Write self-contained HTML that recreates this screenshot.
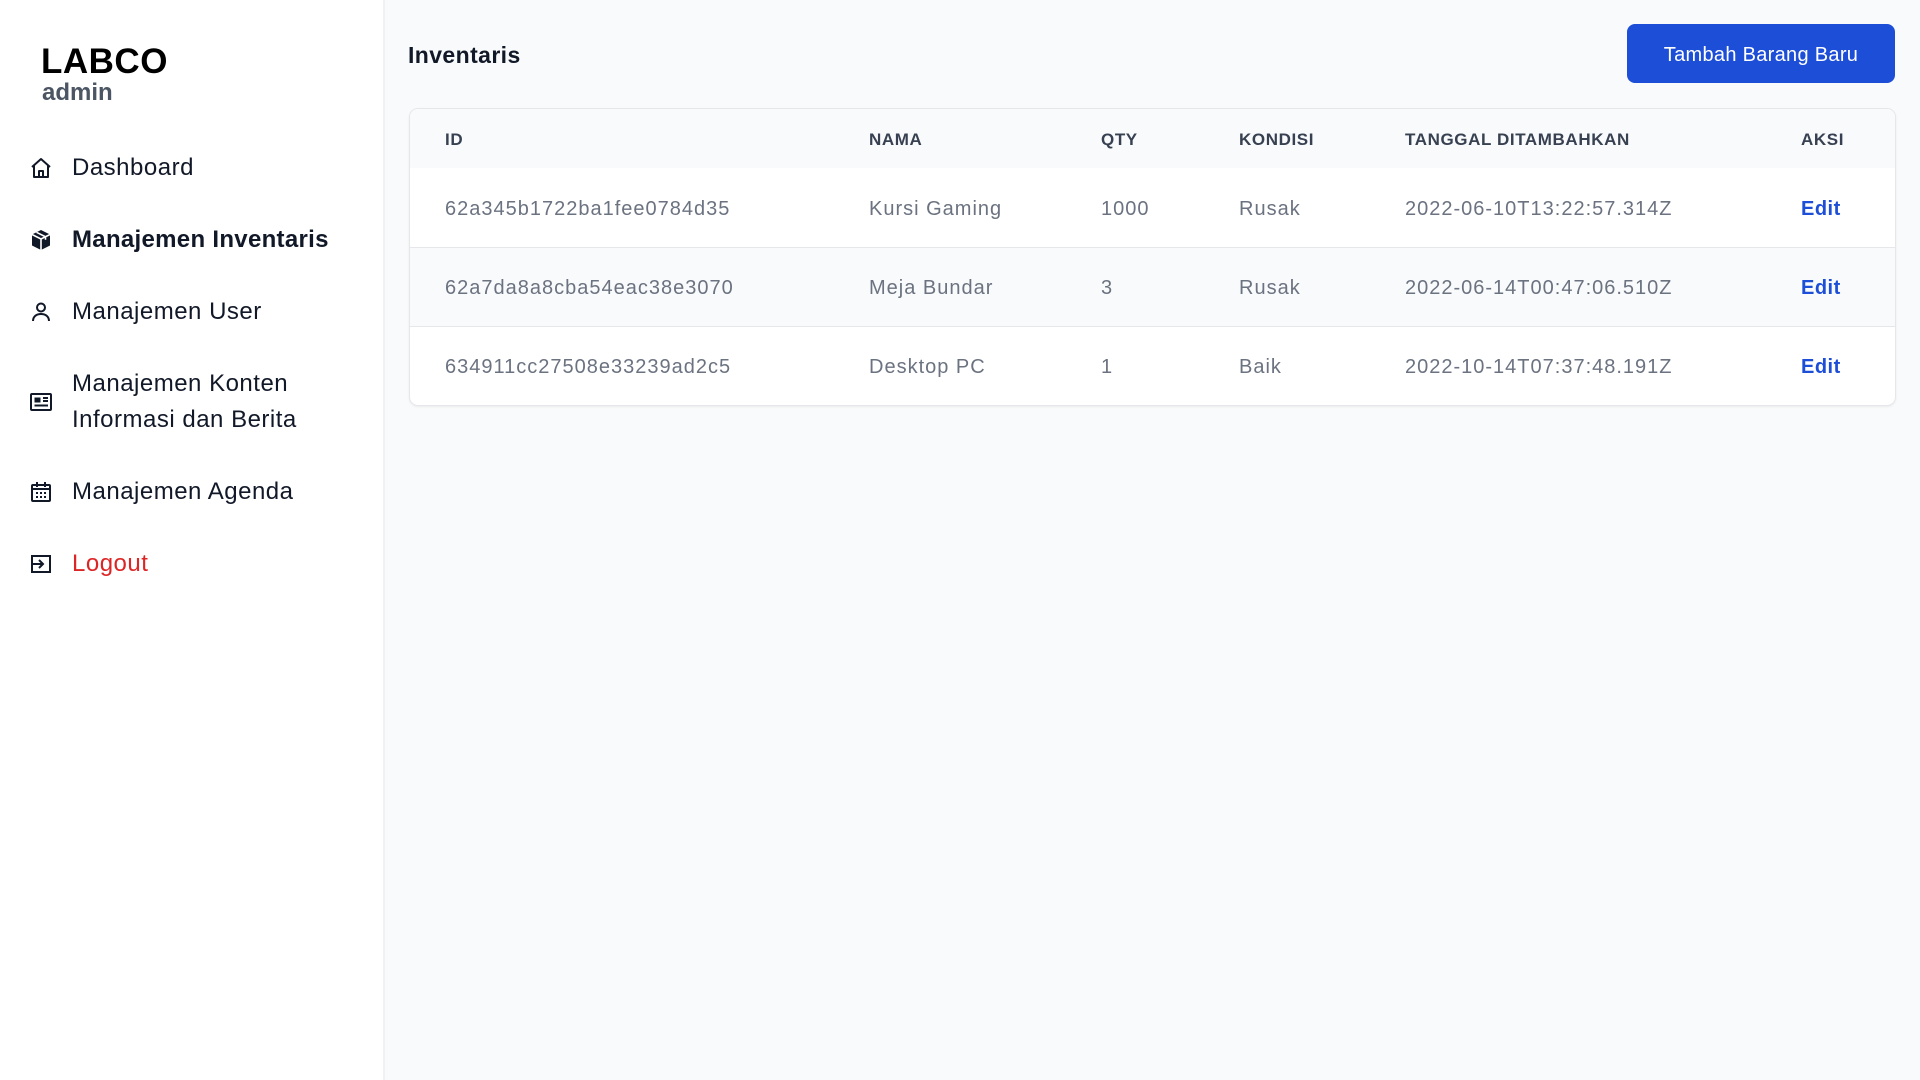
<!DOCTYPE html>
<html><head><meta charset="utf-8"><style>
*{box-sizing:border-box;margin:0;padding:0}
body{width:1920px;height:1080px;background:#f9fafb;font-family:"Liberation Sans",sans-serif;color:#111827;position:relative;overflow:hidden}
.side{position:absolute;left:0;top:0;width:385px;height:1080px;background:#fff;border-right:2px solid #f0f1f3}
.logo{position:absolute;left:41px;top:42px;font-size:35px;font-weight:bold;color:#000;letter-spacing:0.5px}
.adm{position:absolute;left:42px;top:79px;font-size:24px;font-weight:bold;color:#4b5563}
.nav{position:absolute;left:29px;display:flex;align-items:center;font-size:24px;line-height:36px;color:#111827;letter-spacing:0.5px}
.nav svg{width:24px;height:24px;margin-right:19px;flex:none}
.main{position:absolute;left:385px;top:0;right:0}
h1{position:absolute;left:23px;top:42px;font-size:23px;font-weight:bold;letter-spacing:0.4px}
.btn{position:absolute;left:1242px;top:24px;width:268px;height:59px;background:#1d4ed8;color:#fff;border-radius:8px;font-size:20px;display:flex;align-items:center;justify-content:center;padding-top:3px;letter-spacing:0.3px}
.tbl{position:absolute;left:24px;top:108px;width:1487px;border:1px solid #e5e7eb;border-radius:9px;overflow:hidden;background:#fff;box-shadow:0 1px 2px rgba(0,0,0,.06)}
table{border-collapse:collapse;table-layout:fixed;width:100%}
th{height:59px;background:#f9fafb;text-align:left;padding-left:35px;padding-top:3px;font-size:17px;font-weight:bold;color:#374151;letter-spacing:0.6px}
td{height:79px;padding-left:35px;padding-top:4px;font-size:20px;color:#6b7280;border-top:1px solid #e5e7eb;letter-spacing:1px}
tr.g td{background:#f9fafb}
td.e{color:#1d4ed8;font-weight:bold;letter-spacing:0.5px}
</style></head><body>
<div class="side">
<div class="logo">LABCO</div>
<div class="adm">admin</div>
<div class="nav" style="top:150px"><svg viewBox="0 0 24 24" fill="none" stroke="#111827" stroke-width="2" stroke-linejoin="round"><path d="M3 11l9-8 9 8M5 9.5V21h14V9.5M10 21v-6h4v6"/></svg>Dashboard</div>
<div class="nav" style="top:222px;font-weight:bold;letter-spacing:0.3px"><svg viewBox="0 0 24 24"><path d="M12 2l9 4.5v11L12 22l-9-4.5v-11z" fill="#111827"/><path d="M3 6.5l9 4.5 9-4.5M12 11v11M7.5 4.3l9 4.5v3" stroke="#fff" stroke-width="1.6" fill="none"/></svg>Manajemen Inventaris</div>
<div class="nav" style="top:294px"><svg viewBox="0 0 24 24" fill="none" stroke="#111827" stroke-width="2"><circle cx="12" cy="7.5" r="4"/><path d="M4 21c0-4.5 3.5-7 8-7s8 2.5 8 7"/></svg>Manajemen User</div>
<div class="nav" style="top:366px"><svg viewBox="0 0 24 24" fill="none" stroke="#111827" stroke-width="2"><rect x="2" y="4" width="20" height="16" rx="1"/><rect x="5.5" y="7.5" width="6" height="5" fill="#111827" stroke="none"/><path d="M14 8h5M14 11h5M5.5 15.5h13.5"/></svg>Manajemen Konten<br>Informasi dan Berita</div>
<div class="nav" style="top:474px"><svg viewBox="0 0 24 24" fill="none" stroke="#111827" stroke-width="2"><rect x="3" y="5" width="18" height="16" rx="1"/><path d="M3 9h18M8 2v5M16 2v5"/><path d="M7 13h2M11 13h2M15 13h2M7 17h2M11 17h2M15 17h2" stroke-width="2"/></svg>Manajemen Agenda</div>
<div class="nav" style="top:546px;color:#dc2626"><svg viewBox="0 0 24 24" fill="none" stroke="#111827" stroke-width="2"><path d="M9 4H3v16h18V4h-12M3 4v4M3 16v4" /><path d="M2 12h12M10 8l4 4-4 4"/></svg>Logout</div>
</div>
<div class="main">
<h1>Inventaris</h1>
<div class="btn">Tambah Barang Baru</div>
<div class="tbl"><table>
<colgroup><col style="width:424px"><col style="width:232px"><col style="width:138px"><col style="width:166px"><col style="width:396px"><col></colgroup>
<tr><th>ID</th><th>NAMA</th><th>QTY</th><th>KONDISI</th><th>TANGGAL DITAMBAHKAN</th><th>AKSI</th></tr>
<tr><td style="border-top:none">62a345b1722ba1fee0784d35</td><td style="border-top:none">Kursi Gaming</td><td style="border-top:none">1000</td><td style="border-top:none">Rusak</td><td style="border-top:none">2022-06-10T13:22:57.314Z</td><td class="e" style="border-top:none">Edit</td></tr>
<tr class="g"><td>62a7da8a8cba54eac38e3070</td><td>Meja Bundar</td><td>3</td><td>Rusak</td><td>2022-06-14T00:47:06.510Z</td><td class="e">Edit</td></tr>
<tr><td>634911cc27508e33239ad2c5</td><td>Desktop PC</td><td>1</td><td>Baik</td><td>2022-10-14T07:37:48.191Z</td><td class="e">Edit</td></tr>
</table></div>
</div>
</body></html>
